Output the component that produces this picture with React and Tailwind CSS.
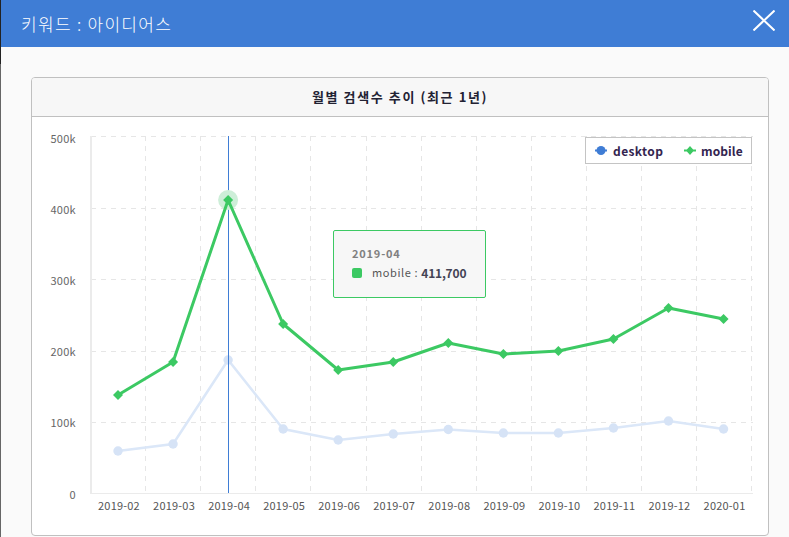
const FONT = { fontFamily: '"Noto Sans CJK KR", "Liberation Sans", sans-serif' };

const months = ['2019-02','2019-03','2019-04','2019-05','2019-06','2019-07','2019-08','2019-09','2019-10','2019-11','2019-12','2020-01'];
const OX = 32;
const OY = 117;
const AXIS = 91 - OX;
const px = (i) => 118 - OX + 55.05 * i;
const mobile = [395,362,200,324,370,362,343,354,351,339,308,319].map((y) => y - OY);
const desktop = [451,444,360,429,440,434,429.5,433,433,428,421,429].map((y) => y - OY);
const gridRows = [136, 208, 279, 351, 422].map((y) => y - OY + 0.5);
const labels = [['500k',139],['400k',210],['300k',281],['200k',352],['100k',423],['0',495]];
const line = (arr) => arr.map((y, i) => `${px(i)},${y}`).join(' ');
const cross = Math.floor(px(2)) + 0.5;

function Chart() {
  return (
    <svg width="736" height="418" className="block" style={FONT}>
      {gridRows.map((y) => (
        <line key={y} x1={AXIS} x2={AXIS + 662} y1={y} y2={y} stroke="#e6e6e6" strokeDasharray="5 5" />
      ))}
      {Array.from({ length: 12 }, (_, i) => {
        const x = Math.floor(AXIS + 55.1 * (i + 1) - 0.5) + 0.5;
        return <line key={i} x1={x} x2={x} y1={19} y2={376} stroke="#e6e6e6" strokeDasharray="5 5" />;
      })}
      <line x1={AXIS} x2={AXIS} y1={19} y2={377} stroke="#ebebeb" strokeWidth="2" />
      <line x1={AXIS} x2={AXIS + 662} y1={376.5} y2={376.5} stroke="#ebebeb" strokeWidth="1" />
      {labels.map(([l, y]) => (
        <text key={l} x={44} y={y - OY + 4} textAnchor="end" fontSize="11" letterSpacing="0.3" fill="#666">{l}</text>
      ))}
      {months.map((m, i) => (
        <text key={m} x={px(i) + 1} y={393} textAnchor="middle" fontSize="11" letterSpacing="0.2" fill="#555">{m}</text>
      ))}
      <polyline points={line(desktop)} fill="none" stroke="#dbe7f8" strokeWidth="2.5" />
      {desktop.map((y, i) => <circle key={i} cx={px(i)} cy={y} r="4.7" fill="#d6e3f6" />)}
      <line x1={cross} x2={cross} y1={19} y2={376} stroke="#3f7dd5" strokeWidth="1" />
      <circle cx={px(2)} cy={mobile[2]} r="10" fill="#cdeed8" />
      <polyline points={line(mobile)} fill="none" stroke="#3cc963" strokeWidth="3" strokeLinejoin="round" />
      {mobile.map((y, i) => (
        <polygon key={i} points={`${px(i)},${y - 5} ${px(i) + 5},${y} ${px(i)},${y + 5} ${px(i) - 5},${y}`} fill="#3cc963" />
      ))}
    </svg>
  );
}

export default function App() {
  return (
    <div className="relative w-[789px] h-[537px] overflow-hidden bg-[#fafafa] flex flex-col" style={FONT}>
      <div className="absolute left-0 top-0 h-[64px] w-px bg-[#222222]" />
      <div className="absolute left-0 top-[64px] bottom-0 w-px bg-[#666666]" />
      <header className="h-[47px] shrink-0 bg-[#3f7dd5] flex items-center justify-between pl-[21px] pr-[14px]">
        <span className="text-white text-[17px] tracking-[1.3px] font-light">키워드 : 아이디어스</span>
        <svg width="22" height="21" viewBox="0 0 22 21" stroke="white" strokeWidth="2" className="mb-[7px]">
          <path d="M0.5 0.5 L21.5 20.5 M21.5 0.5 L0.5 20.5" />
        </svg>
      </header>
      <main className="flex-1 pt-[30px] pl-[31px] pr-[20px]">
        <section className="relative h-[459px] rounded-[4px] border border-[#c0c0c0] bg-white overflow-hidden">
          <div className="h-[38px] bg-[#f7f7f7] border-b border-[#c0c0c0] box-content flex items-center justify-center text-[13px] font-bold text-[#222233] tracking-[1.6px]">
            월별 검색수 추이 (최근 1년)
          </div>
          <Chart />
          <div className="absolute left-[553px] top-[59px] w-[167px] h-[27px] border border-[#c4c4c4] bg-white flex items-center pl-[9px] text-[12px] font-bold text-[#33244f]">
            <svg width="12" height="9" viewBox="0 0 12 9" className="mr-[6px]">
              <circle cx="6" cy="4.5" r="4.5" fill="#3f7dd5" />
              <rect x="0" y="3.5" width="12" height="2" fill="#3f7dd5" />
            </svg>
            <span className="tracking-[0.4px] w-[50px]">desktop</span>
            <svg width="12" height="9" viewBox="0 0 12 9" className="ml-[21px] mr-[5px]">
              <path d="M6 0 L10 4.5 L6 9 L2 4.5 Z M0 3.5 H12 V5.5 H0 Z" fill="#3cc963" />
            </svg>
            <span className="tracking-[0.1px]">mobile</span>
          </div>
          <div className="absolute left-[301px] top-[152px] w-[153px] h-[68px] rounded-[2px] border border-[#3cc963] bg-[#f7f7f7] pl-[18px] pt-[14px]">
            <div className="text-[11px] font-bold text-[#808080] leading-[17px] tracking-[0.8px]">2019-04</div>
            <div className="flex items-center h-[19px] mt-[1px] text-[11px] text-[#555555]">
              <span className="w-[10px] h-[10px] rounded-[2px] bg-[#3cc963] mr-[10px]" />
              <span className="tracking-[0.6px]">mobile :&nbsp;</span>
              <span className="font-bold text-[#444455] text-[12px] tracking-[-0.2px]">411,700</span>
            </div>
          </div>
        </section>
      </main>
    </div>
  );
}
